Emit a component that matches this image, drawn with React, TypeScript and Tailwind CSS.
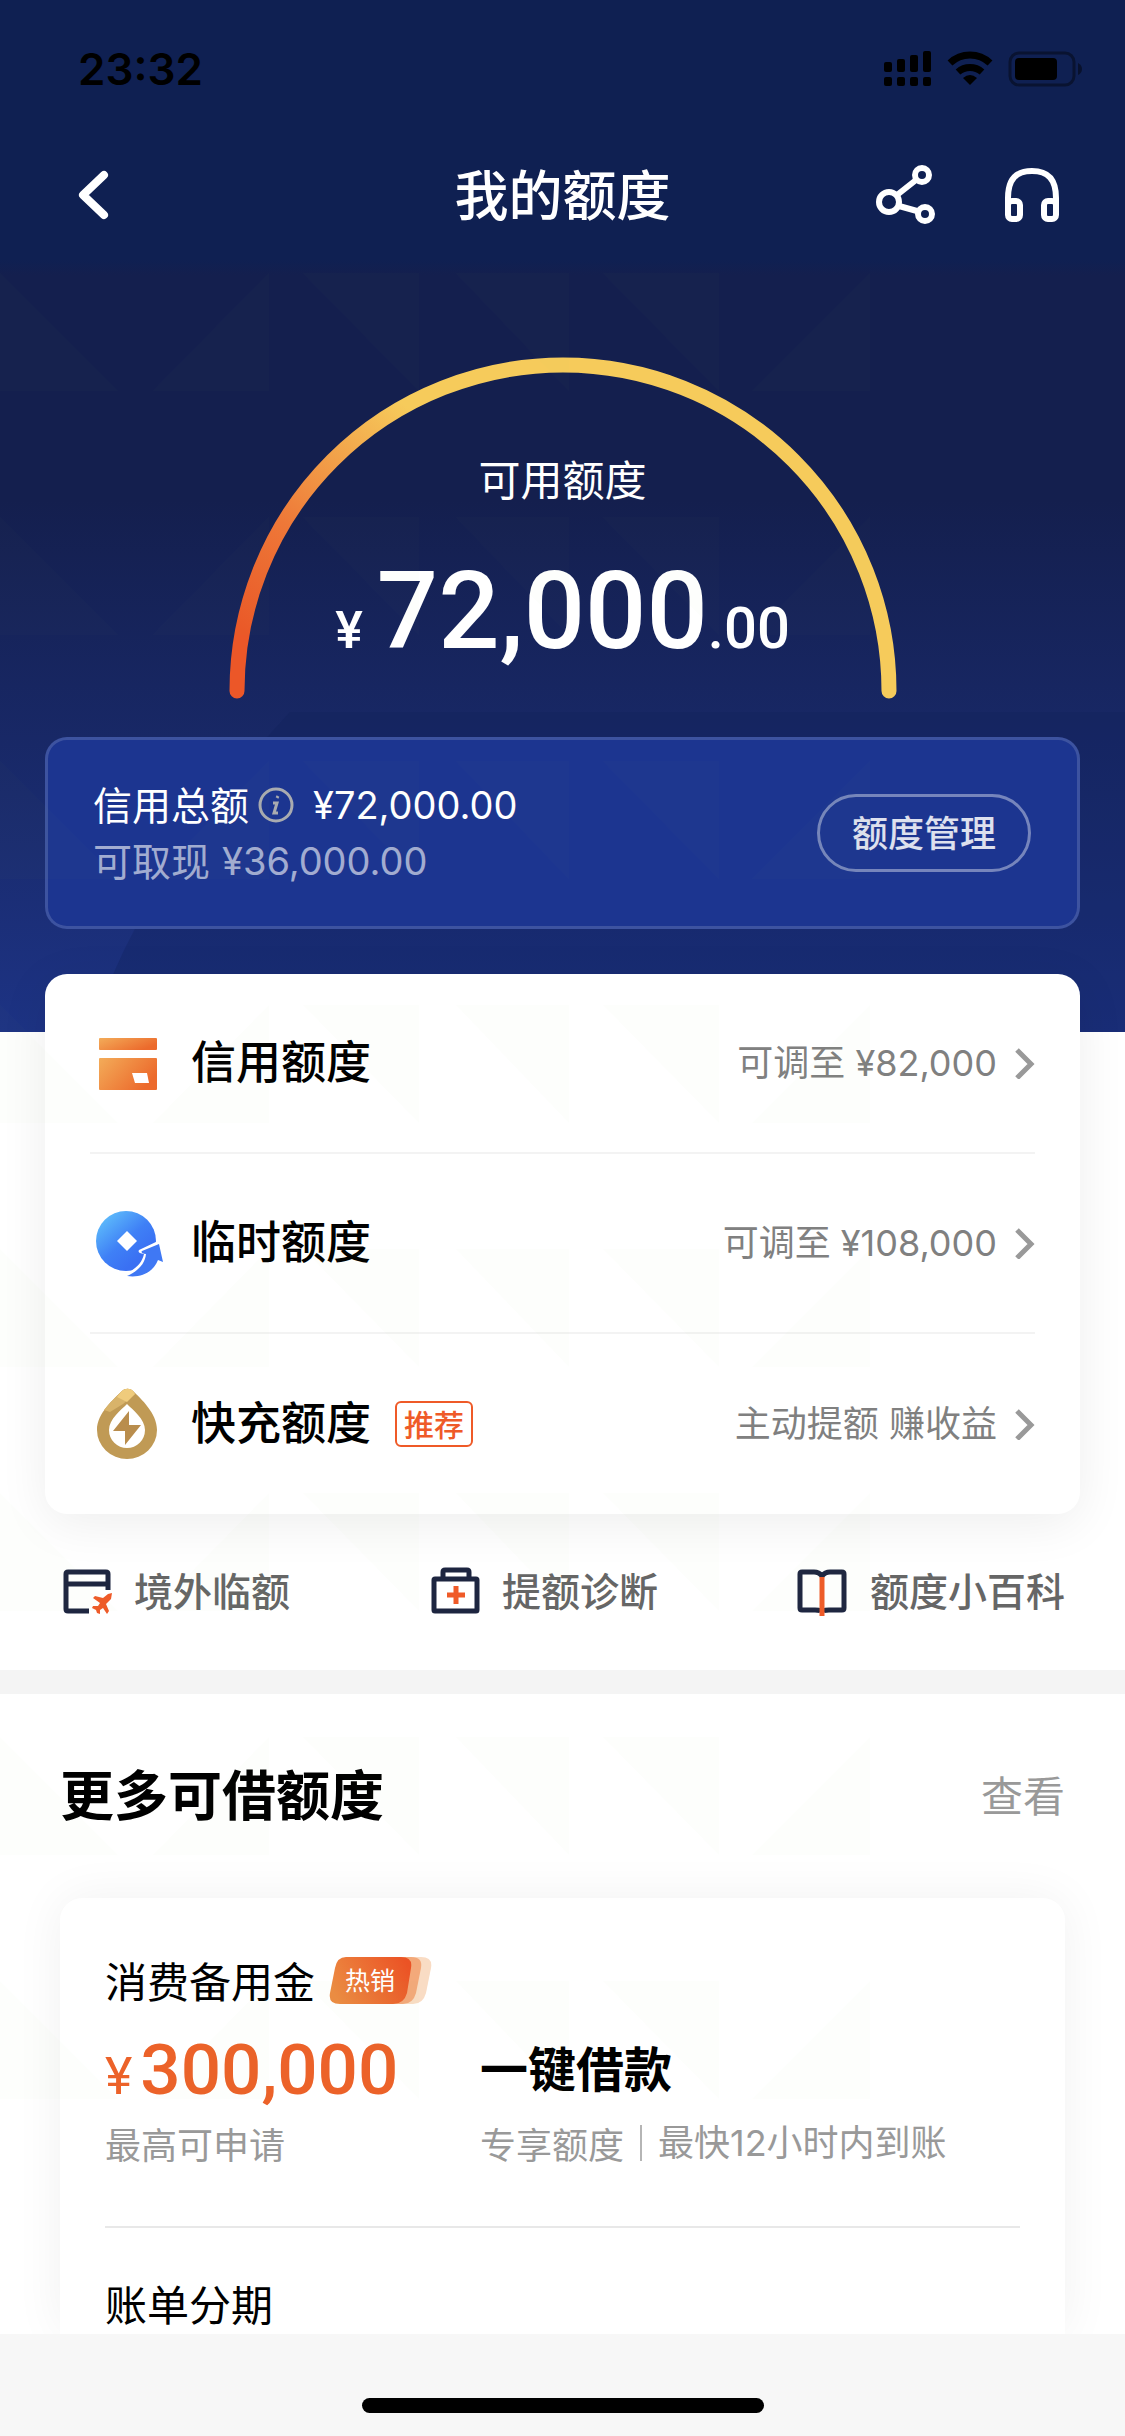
import React from "react";

/* Faint triangle bands laid over the whole page as a watermark. */
function Watermark() {
  return (
    <svg className="pointer-events-none absolute inset-0 h-full w-full" aria-hidden="true">
      <defs>
        <pattern id="facets" width="1125" height="244" y="29" patternUnits="userSpaceOnUse">
          <path
            d="M0 0L118 118H0ZM269 0V118H153ZM303 0H419V118ZM456 0H569V118ZM603 0H719V118ZM870 0V118H752Z"
            fill="#8a9a50"
            fillOpacity="0.017"
          />
        </pattern>
      </defs>
      <rect y="244" width="100%" height="1880" fill="url(#facets)" />
    </svg>
  );
}

function Chevron() {
  return (
    <svg width="20" height="32" viewBox="0 0 20 32" fill="none" stroke="#999" strokeWidth="5" aria-hidden="true">
      <path d="M2 3L16 17L2 31" />
    </svg>
  );
}

function CardIcon() {
  return (
    <svg width="66" height="72" viewBox="0 0 66 72" aria-hidden="true">
      <defs>
        <linearGradient id="cardTone" x1="0" y1="0" x2="1" y2="0.5">
          <stop offset="0" stopColor="#F3AC59" />
          <stop offset="1" stopColor="#EC6A2C" />
        </linearGradient>
      </defs>
      <rect x="3" y="11" width="58" height="12" rx="1" fill="url(#cardTone)" />
      <rect x="3" y="31" width="58" height="32" rx="1" fill="url(#cardTone)" />
      <path d="M36 46H51L53 56H39Z" fill="#fff" />
    </svg>
  );
}

function CoinIcon() {
  return (
    <svg width="68" height="72" viewBox="0 0 68 72" aria-hidden="true">
      <defs>
        <linearGradient id="coinTone" x1="0.1" y1="0.1" x2="0.7" y2="0.8">
          <stop offset="0" stopColor="#5EBDFB" />
          <stop offset="0.6" stopColor="#3F80F6" />
          <stop offset="1" stopColor="#3A70F3" />
        </linearGradient>
      </defs>
      <circle cx="30" cy="34" r="30" fill="url(#coinTone)" />
      <path d="M31 24L41 34L31 44L21 34Z" fill="#fff" />
      <path d="M62 34L43 43Q41 46 48 47C46 56 40 62 28 68Q36 70 44 67L68 56Z" fill="#fff" />
      <path
        d="M63 37L46 44Q44 46 50 47C49 57 42 64 31 69C46 71 57 65 62 53L67 55Z"
        fill="#3F78F4"
      />
    </svg>
  );
}

function DropIcon() {
  return (
    <svg width="66" height="72" viewBox="0 0 66 72" aria-hidden="true">
      <path d="M26 3C29 0 34 0 37 3C45 11 61 25 61 42A30 29 0 0 1 1 42C1 25 18 11 26 3Z" fill="#C09A55" />
      <path d="M26 3C29 0 34 0 37 3L39 6L27 16L14 24L8 22C13 15 20 9 26 3Z" fill="#D8B36A" />
      <path d="M25 4C29 0 34 0 37 3L39 6L31 14L21 9Z" fill="#EFCB7C" />
      <path d="M31 16C37 22 49 31 49 42A18 18 0 0 1 13 42C13 31 25 22 31 16Z" fill="#fff" />
      <path d="M33 23L17 43H29V57L45 37H33Z" fill="#B98D4D" />
    </svg>
  );
}

function TravelIcon() {
  return (
    <svg width="52" height="52" viewBox="-3 -3 52 52" fill="none" aria-hidden="true">
      <path d="M26 42H5Q3 42 3 40V5Q3 3 5 3H43Q45 3 45 5V21M3 15H45" stroke="#1D2540" strokeWidth="5" />
      <path
        d="M49 24L48 30L43 35L46 42L44 45L40 39L37 41L37 45L34 44L33 41L29 39L30 37L35 37L37 34L30 29L32 27L40 29L45 25Z"
        fill="#EF5A28"
      />
    </svg>
  );
}

function KitIcon() {
  return (
    <svg width="52" height="52" viewBox="-4 -3 52 52" fill="none" aria-hidden="true">
      <rect x="2" y="10" width="43" height="32" rx="1" stroke="#1D2540" strokeWidth="5" />
      <path d="M11 10V3Q11 1 13 1H35Q37 1 37 3V10" stroke="#1D2540" strokeWidth="5" />
      <path d="M24 17V35M15 26H33" stroke="#EF5A28" strokeWidth="5" />
    </svg>
  );
}

function BookIcon() {
  return (
    <svg width="52" height="52" viewBox="-1 -3 52 52" fill="none" aria-hidden="true">
      <path
        d="M25 7Q22 3 17 3H5Q3 3 3 5V39Q3 41 5 41H18Q25 41 25 43Q25 41 32 41H45Q47 41 47 39V5Q47 3 45 3H33Q28 3 25 7Z"
        stroke="#1D2540"
        strokeWidth="5"
      />
      <path d="M25 8V47" stroke="#EF5A28" strokeWidth="5" />
    </svg>
  );
}

const limits = [
  { name: "信用额度", note: "可调至 ¥82,000", icon: <CardIcon />, tag: "" },
  { name: "临时额度", note: "可调至 ¥108,000", icon: <CoinIcon />, tag: "" },
  { name: "快充额度", note: "主动提额 赚收益", icon: <DropIcon />, tag: "推荐" },
];

const links = [
  { name: "境外临额", icon: <TravelIcon /> },
  { name: "提额诊断", icon: <KitIcon /> },
  { name: "额度小百科", icon: <BookIcon /> },
];

function StatusBar() {
  return (
    <div className="flex h-[138px] items-center justify-between pr-[43px] pl-[78px] text-black">
      <span className="font-[Inter,sans-serif] text-[44px] leading-none font-semibold">23:32</span>
      <div className="flex items-center gap-[15px]">
        <svg width="48" height="36" viewBox="0 0 48 36" aria-hidden="true">
          <rect x="0" y="11" width="8" height="10" rx="2" />
          <rect x="13" y="8" width="8" height="13" rx="2" />
          <rect x="26" y="4" width="8" height="17" rx="2" />
          <rect x="39" y="0" width="8" height="21" rx="2" />
          <rect x="0" y="26" width="8" height="9" rx="2" />
          <rect x="13" y="26" width="8" height="9" rx="2" />
          <rect x="26" y="26" width="8" height="9" rx="2" />
          <rect x="39" y="26" width="8" height="9" rx="2" />
        </svg>
        <svg width="46" height="36" viewBox="0 0 46 36" fill="none" stroke="#000" strokeWidth="7" aria-hidden="true">
          <path d="M3 12A29 29 0 0 1 43 12" />
          <path d="M11 21A18 18 0 0 1 35 21" />
          <path d="M16 27Q23 21 30 27L23 34Z" fill="#000" stroke="none" />
        </svg>
        <svg width="74" height="36" viewBox="0 0 74 36" aria-hidden="true">
          <rect x="2" y="2" width="64" height="32" rx="9" fill="none" stroke="#000" strokeOpacity="0.4" strokeWidth="3" />
          <rect x="7" y="7" width="42" height="22" rx="4" />
          <path d="M70 12Q74 14 74 18Q74 22 70 24Z" fillOpacity="0.45" />
        </svg>
      </div>
    </div>
  );
}

function Header() {
  return (
    <header className="grid h-[114px] grid-cols-3 items-center px-[62px] text-white">
      <button type="button" aria-label="返回" className="justify-self-start px-3.5">
        <svg width="34" height="50" viewBox="0 0 34 50" fill="none" stroke="#fff" strokeWidth="8" strokeLinecap="round" strokeLinejoin="round" aria-hidden="true">
          <path d="M28 5L7 25L28 45" />
        </svg>
      </button>
      <h1 className="justify-self-center pb-1 text-[54px] leading-none font-medium whitespace-nowrap">我的额度</h1>
      <div className="flex items-center justify-self-end gap-16">
        <button type="button" aria-label="分享">
          <svg width="62" height="62" viewBox="0 0 62 62" fill="none" stroke="#fff" strokeWidth="6" aria-hidden="true">
            <circle cx="14" cy="38" r="10" />
            <circle cx="47" cy="11" r="7" />
            <circle cx="50" cy="50" r="7" />
            <path d="M22 31L41 16M24 42L42 47" />
          </svg>
        </button>
        <button type="button" aria-label="客服">
          <svg width="62" height="62" viewBox="0 0 62 62" fill="none" stroke="#fff" strokeWidth="6" aria-hidden="true">
            <path d="M7 42V34C7 15 15 7 31 7S55 15 55 34V42" />
            <rect x="7" y="37" width="12" height="18" rx="4" />
            <rect x="43" y="37" width="12" height="18" rx="4" />
          </svg>
        </button>
      </div>
    </header>
  );
}

function Gauge() {
  return (
    <section className="grid justify-items-center pt-[104px] *:col-start-1 *:row-start-1">
      <svg width="668" height="344" viewBox="0 0 668 344" fill="none" strokeWidth="15" strokeLinecap="round" aria-hidden="true">
        <defs>
          <linearGradient id="arcTone" gradientUnits="userSpaceOnUse" x1="20" y1="280" x2="190" y2="60">
            <stop offset="0" stopColor="#EC5728" />
            <stop offset="0.4" stopColor="#EE7838" />
            <stop offset="1" stopColor="#F6CB5B" />
          </linearGradient>
        </defs>
        <path d="M8 335A326 326 0 0 1 660 335" stroke="url(#arcTone)" />
      </svg>
      <div className="flex flex-col items-center pt-[98px] text-white">
        <p className="text-[42px] leading-[48px]">可用额度</p>
        <p className="flex items-baseline pt-[54px] font-[Roboto,sans-serif] font-medium">
          <span className="mr-3.5 text-[52px] leading-none">¥</span>
          <span className="text-[108px] leading-[110px]">72,000</span>
          <span className="text-[58px] leading-none">.00</span>
        </p>
      </div>
    </section>
  );
}

function Summary() {
  return (
    <section className="mx-[45px] mt-[37px] flex h-[192px] items-center justify-between rounded-[22px] border-3 border-white/15 bg-[#1c3590] pr-[46px] pl-[45px]">
      <div className="text-[39px] leading-[56px] text-white">
        <p className="flex h-14 items-center">
          <span className="pb-1">信用总额</span>
          <svg className="mx-2" width="38" height="38" viewBox="0 0 38 38" fill="none" stroke="#A9ABB0" strokeWidth="3" aria-hidden="true">
            <circle cx="19" cy="19" r="16" />
            <path d="M21 10L20 12M16 17H20L17 27H21" />
          </svg>
          <span className="ml-2.5 font-[Inter,sans-serif] text-[38px]">¥72,000.00</span>
        </p>
        <p className="flex h-14 items-center gap-3 text-white/60">
          <span className="pb-1">可取现</span>
          <span className="font-[Inter,sans-serif] text-[38px]">¥36,000.00</span>
        </p>
      </div>
      <button type="button" className="h-[78px] rounded-full border-3 border-white/40 px-8 pb-1 text-[36px] leading-none font-medium text-white/85">
        额度管理
      </button>
    </section>
  );
}

function HotBadge() {
  return (
    <span className="relative flex h-[47px] w-[103px] items-center pb-0.5 pl-4 text-[25px] leading-none text-white">
      <svg className="absolute inset-0" width="103" height="47" viewBox="0 0 103 47" aria-hidden="true">
        <defs>
          <linearGradient id="hotTone" x1="0" y1="0.6" x2="1" y2="0.3">
            <stop offset="0" stopColor="#EC8B42" />
            <stop offset="1" stopColor="#EB5325" />
          </linearGradient>
        </defs>
        <path d="M40 0H92Q104 0 102 11L97 36Q94 47 84 47H40Z" fill="#F9DCC4" />
        <path d="M30 0H82Q94 0 92 11L87 36Q84 47 74 47H30Z" fill="#F3A97A" />
        <path d="M17 0H72Q84 0 82 11L78 36Q75 47 64 47H11Q-1 47 1 36L6 11Q8 0 17 0Z" fill="url(#hotTone)" />
      </svg>
      <span className="relative">热销</span>
    </span>
  );
}

export default function App() {
  return (
    <div className="relative flex min-h-screen flex-col bg-white font-['Noto_Sans_CJK_SC',sans-serif]">
      <div className="relative">
        <div className="absolute inset-x-0 top-0 h-[1032px] overflow-hidden bg-[linear-gradient(to_bottom,#0f2052_0,#0f2052_260px,#141f4e_275px,#141f4e_500px,#1d3384_1032px)]">
          <svg className="absolute bottom-0 left-0 h-[320px] w-full" viewBox="0 0 1125 320" preserveAspectRatio="none" aria-hidden="true">
            <path d="M90 320Q150 150 290 0H1125V320Z" fill="#10205a" fillOpacity="0.3" />
          </svg>
        </div>
        <div className="relative">
          <StatusBar />
          <Header />
          <Gauge />
          <Summary />
          <ul className="mx-[45px] mt-[45px] rounded-[22px] bg-white px-[45px] shadow-[0_10px_50px_rgba(0,0,0,0.07)]">
            {limits.map((item) => (
              <li key={item.name} className="h-[180px] border-b-2 border-[#f3f3f3] last:border-b-0">
                <a href="#limit" className="flex h-full items-center pl-[6px]">
                  <span className="w-[95px] shrink-0">{item.icon}</span>
                  <span className="pb-2 text-[45px] leading-none font-medium text-black">{item.name}</span>
                  {item.tag && (
                    <span className="ml-6 flex h-[46px] items-center rounded-md border-2 border-[#EF5A28] px-[7px] pb-0.5 text-[30px] leading-none font-medium text-[#EF5A28]">
                      {item.tag}
                    </span>
                  )}
                  <span className="mr-[18px] ml-auto font-[Inter,'Noto_Sans_CJK_SC',sans-serif] text-[36px] leading-none text-[#808080]">{item.note}</span>
                  <Chevron />
                </a>
              </li>
            ))}
          </ul>
        </div>
      </div>

      <nav className="flex h-[156px] items-center justify-between px-[60px]">
        {links.map((item) => (
          <a key={item.name} href="#guide" className="flex items-center gap-[22px] text-[39px] leading-none font-medium text-[#666]">
            {item.icon}
            <span className="pb-1.5">{item.name}</span>
          </a>
        ))}
      </nav>
      <hr className="h-6 border-0 bg-[#f4f4f4]" />

      <section className="px-[60px]">
        <div className="flex h-[204px] items-center justify-between">
          <h2 className="pb-1.5 text-[54px] leading-none font-bold text-black">更多可借额度</h2>
          <a href="#all" className="pb-1 text-[42px] leading-none text-[#999]">查看</a>
        </div>
        <div className="rounded-t-[22px] bg-white px-[45px] shadow-[0_0_50px_rgba(0,0,0,0.06)]">
          <article className="border-b-2 border-[#e8e8e8] pt-[52px] pb-[59px]">
            <div className="flex items-center gap-3.5">
              <h3 className="text-[42px] leading-[60px] text-black">消费备用金</h3>
              <HotBadge />
            </div>
            <div className="mt-5 flex">
              <div className="w-[375px] shrink-0">
                <p className="flex h-[72px] items-baseline gap-2 pt-1 font-[Roboto,sans-serif] leading-[72px] text-[#EC6229]">
                  <span className="text-[52px] leading-none">¥</span>
                  <span className="text-[71px] font-medium">300,000</span>
                </p>
                <p className="mt-[17px] text-[36px] leading-[48px] text-[#999]">最高可申请</p>
              </div>
              <div>
                <p className="text-[48px] leading-[72px] font-bold text-black">一键借款</p>
                <p className="mt-[17px] flex items-center gap-4 text-[36px] leading-[48px] text-[#999]">
                  专享额度
                  <span className="h-9 w-0.5 bg-[#b5b5b5]" />
                  <span className="font-[Inter,'Noto_Sans_CJK_SC',sans-serif]">最快12小时内到账</span>
                </p>
              </div>
            </div>
          </article>
          <article className="pt-12 pb-1">
            <h3 className="text-[42px] leading-[54px] text-black">账单分期</h3>
          </article>
        </div>
      </section>

      <Watermark />
      <footer className="relative flex h-[102px] items-center justify-center bg-[#f7f7f7] pt-10">
        <span className="h-[15px] w-[402px] rounded-full bg-black" />
      </footer>
    </div>
  );
}
